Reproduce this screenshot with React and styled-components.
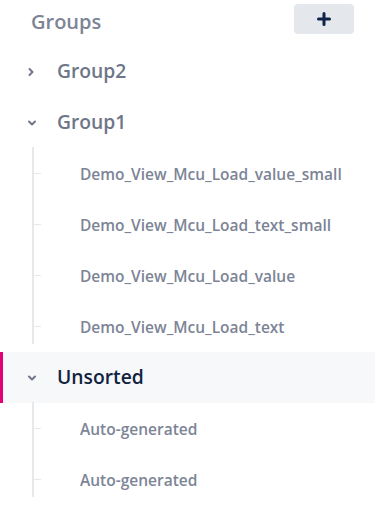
import React from "react";
import styled, { createGlobalStyle } from "styled-components";

const Global = createGlobalStyle`
  html, body { margin: 0; padding: 0; background: #ffffff; }
  body { font-family: "Open Sans", "Noto Sans", sans-serif; }
`;

const Panel = styled.div`
  width: 375px;
  height: 507px;
  overflow: hidden;
  background: #ffffff;
`;

const Header = styled.div`
  height: 46px;
  display: flex;
  align-items: center;
  justify-content: space-between;
  padding: 0 21px 0 31px;
  box-sizing: border-box;
`;

const Title = styled.div`
  font-size: 20px;
  font-weight: 600;
  color: #7c8495;
  margin-top: -4px;
`;

const AddButton = styled.button`
  width: 60px;
  height: 30px;
  margin-top: -8px;
  border: none;
  border-radius: 4px;
  background: #e4e7eb;
  display: flex;
  align-items: center;
  justify-content: center;
  padding: 0;
`;

const GroupRow = styled.div`
  position: relative;
  height: 51px;
  display: flex;
  align-items: center;
  background: ${(p) => (p.$active ? "#f7f8fa" : "transparent")};
  &::before {
    content: "";
    display: ${(p) => (p.$active ? "block" : "none")};
    position: absolute;
    left: 0;
    top: 0;
    bottom: 0;
    width: 3px;
    background: #e2007a;
  }
`;

const Chevron = styled.span`
  width: 26px;
  margin-left: 27px;
  display: flex;
  align-items: center;
`;

const GroupName = styled.span`
  font-size: 19.3px;
  font-weight: 600;
  color: ${(p) => (p.$active ? "#112341" : "#6e7688")};
  margin-left: 4px;
  margin-top: -2px;
`;

const Children = styled.div`
  position: relative;
  &::before {
    content: "";
    position: absolute;
    left: 32px;
    top: -1px;
    bottom: 8px;
    width: 2px;
    background: #e6e8eb;
  }
`;

const ChildRow = styled.div`
  position: relative;
  height: 51px;
  display: flex;
  align-items: center;
  padding-left: 80px;
  font-size: 15.5px;
  font-weight: 600;
  color: #7c8496;
  &::before {
    content: "";
    position: absolute;
    left: 33px;
    top: 25px;
    width: 8px;
    height: 1px;
    background: #e6e8eb;
  }
`;

const ChevronRight = () => (
  <svg width="8" height="10" viewBox="0 0 8 10">
    <path d="M2.5 2 L5.5 5 L2.5 8" fill="none" stroke="#6e7688" strokeWidth="2" strokeLinecap="round" strokeLinejoin="round" />
  </svg>
);

const ChevronDown = () => (
  <svg width="10" height="8" viewBox="0 0 10 8">
    <path d="M2 2.5 L5 5.5 L8 2.5" fill="none" stroke="#6e7688" strokeWidth="2" strokeLinecap="round" strokeLinejoin="round" />
  </svg>
);

const PlusIcon = () => (
  <svg width="14" height="14" viewBox="0 0 14 14">
    <path d="M7 1.5 V12.5 M1.5 7 H12.5" stroke="#0f2448" strokeWidth="3" strokeLinecap="round" />
  </svg>
);

const groups = [
  { name: "Group2", open: false, items: [] },
  {
    name: "Group1",
    open: true,
    items: [
      "Demo_View_Mcu_Load_value_small",
      "Demo_View_Mcu_Load_text_small",
      "Demo_View_Mcu_Load_value",
      "Demo_View_Mcu_Load_text",
    ],
  },
  { name: "Unsorted", open: true, active: true, items: ["Auto-generated", "Auto-generated"] },
];

export default function App() {
  return (
    <>
      <Global />
      <Panel>
        <Header>
          <Title>Groups</Title>
          <AddButton aria-label="Add group">
            <PlusIcon />
          </AddButton>
        </Header>
        {groups.map((g) => (
          <div key={g.name}>
            <GroupRow $active={g.active}>
              <Chevron>{g.open ? <ChevronDown /> : <ChevronRight />}</Chevron>
              <GroupName $active={g.active}>{g.name}</GroupName>
            </GroupRow>
            {g.open && (
              <Children>
                {g.items.map((it, i) => (
                  <ChildRow key={i}>{it}</ChildRow>
                ))}
              </Children>
            )}
          </div>
        ))}
      </Panel>
    </>
  );
}
